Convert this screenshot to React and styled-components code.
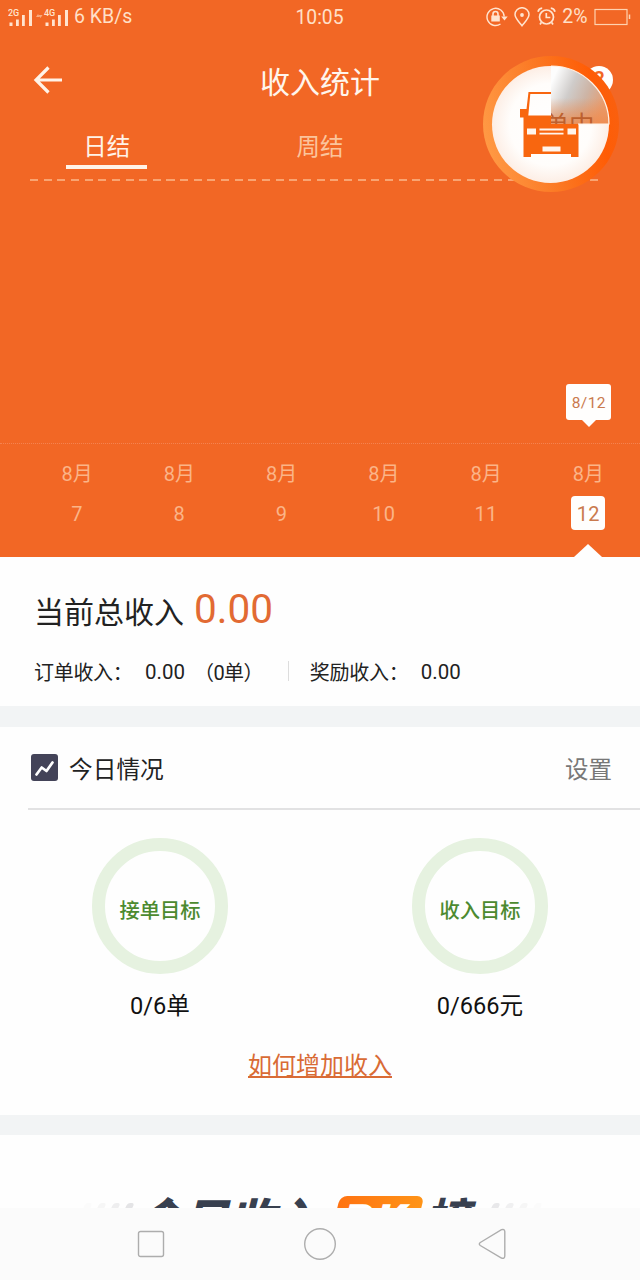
import styled, { createGlobalStyle } from 'styled-components';

const days = [
  { month: '8月', day: 7 },
  { month: '8月', day: 8 },
  { month: '8月', day: 9 },
  { month: '8月', day: 10 },
  { month: '8月', day: 11 },
  { month: '8月', day: 12, tip: '8/12' },
];

const goals = [
  { name: '接单目标', value: '0/6单' },
  { name: '收入目标', value: '0/666元' },
];

function SignalIcon({ label, arrows }) {
  return (
    <svg width={arrows ? 35 : 25} height="22" viewBox={arrows ? '-10 0 35 22' : '0 0 25 22'}>
      {arrows && (
        <path d="M-8 11l2-3 2 3zM-5.500 9l2 3 2-3z" fill="#f9ab80" />
      )}
      <text x="0" y="9.500" fontSize="9" fontWeight="500" fill="#ffe4cf">
        {label}
      </text>
      <path d="M1.500 16.500h3V20h-3zM8 13.500h2.800V20H8zM14 9h2.800v11H14zM21 4h3v16h-3z" fill="#ffe4cf" />
    </svg>
  );
}

function LockIcon() {
  return (
    <svg width="22" height="20" viewBox="0 0 22 20" fill="none" stroke="#ffe4cf" strokeWidth="1.400">
      <path d="M18.200 9.500A8.600 8.600 0 1 0 14.500 17" />
      <path d="M15.200 9.500h6.500l-3.200 4z" fill="#ffe4cf" stroke="none" />
      <rect x="5.300" y="8.500" width="8.500" height="6" fill="#ffe4cf" stroke="none" />
      <path d="M7 9V7a2.500 2.500 0 0 1 5 0v2" strokeWidth="1.600" />
    </svg>
  );
}

function PinIcon() {
  return (
    <svg width="16" height="20" viewBox="0 0 16 20" fill="none" stroke="#ffe4cf" strokeWidth="1.500">
      <path d="M8 18.700C4 13.700 1 11 1 7.500a7 6.800 0 0 1 14 0C15 11 12 13.700 8 18.700z" />
      <circle cx="8" cy="8" r="1.900" fill="#ffe4cf" stroke="none" />
    </svg>
  );
}

function AlarmIcon() {
  return (
    <svg width="19" height="19" viewBox="0 0 19 19" fill="none" stroke="#ffe4cf" strokeWidth="1.700">
      <circle cx="9.500" cy="10" r="7" />
      <path d="M9.300 6v4.500h4M1 4.800c.5-2 2-3.400 4.200-3.600M18 4.800c-.5-2-2-3.400-4.200-3.600M4.300 15.500L3 17.500M14.700 15.500l1.300 2" />
    </svg>
  );
}

function BatteryIcon() {
  return (
    <svg width="37" height="18" viewBox="0 0 37 18" fill="none" stroke="#ffd2b0" strokeWidth="1.200">
      <rect x="1" y="1.500" width="32" height="15" />
      <path d="M35.500 6.500v4.500" strokeWidth="1.500" />
    </svg>
  );
}

function BackArrow() {
  return (
    <svg width="30" height="28" viewBox="0 0 30 28" fill="none" stroke="#fff3e8" strokeWidth="3.200">
      <path d="M15.500 1.500L3 14l12.500 12.500M3 14h26" />
    </svg>
  );
}

function TrendIcon() {
  return (
    <svg width="27" height="27" viewBox="0 0 27 27">
      <rect width="27" height="27" rx="3" fill="#434358" />
      <path
        d="M5.500 20.500l5.200-7 4.800 3.500 6-8.500"
        fill="none"
        stroke="#fff"
        strokeWidth="2.700"
        strokeLinecap="round"
        strokeLinejoin="round"
      />
    </svg>
  );
}

function TruckBadge() {
  return (
    <svg width="136" height="136" viewBox="483 56 136 136">
      <defs>
        <linearGradient id="rim" x1="0" x2="1" y1="0.600" y2="0.400">
          <stop offset="0" stopColor="#ff9a45" />
          <stop offset="0.500" stopColor="#fb7621" />
          <stop offset="0.850" stopColor="#ff5c05" />
          <stop offset="1" stopColor="#f9600f" />
        </linearGradient>
        <radialGradient id="face">
          <stop offset="0" stopColor="#fff" />
          <stop offset="0.700" stopColor="#fffdfb" />
          <stop offset="1" stopColor="#fdeee5" />
        </radialGradient>
        <linearGradient id="sweep" x1="0" y1="0.300" x2="0.900" y2="0.700">
          <stop offset="0" stopColor="#fdfdfd" />
          <stop offset="0.350" stopColor="#cfccca" />
          <stop offset="0.650" stopColor="#cdb4a5" />
          <stop offset="1" stopColor="#e79d70" />
        </linearGradient>
        <linearGradient id="glow" x1="0" y1="0" x2="0" y2="1">
          <stop offset="0.550" stopColor="#f08a4c" stopOpacity="0" />
          <stop offset="1" stopColor="#f08a4c" stopOpacity="0.800" />
        </linearGradient>
        <clipPath id="sector">
          <path d="M551 124V66a58 58 0 0 1 58 58z" />
        </clipPath>
      </defs>
      <circle cx="551" cy="124" r="68" fill="url(#rim)" />
      <circle cx="550.500" cy="124.500" r="58.500" fill="url(#face)" />
      <g clipPath="url(#sector)">
        <path d="M551 124V66a58 58 0 0 1 58 58z" fill="url(#sweep)" />
        <path d="M551 124V66a58 58 0 0 1 58 58z" fill="url(#glow)" />
        <text x="543.500" y="134" fontSize="25.500" fill="#b95a28" opacity="0.900">
          单中
        </text>
      </g>
      <path
        d="M528.500 92H551v2h-20.700l-2 21.500H551v8.500h27.500v33H571v-3h-40v3h-7.500v-39.500H520V109h6.500z"
        fill="#f8660f"
      />
      <path
        d="M527 128.500h9v6h-9zM567.500 128.500h8.500v6h-8.500zM539.500 128.500h24v2h-24zM539.500 132.800h24v1.800h-24zM542.500 146.500h18v5h-18z"
        fill="#fff5ec"
      />
      <path d="M551 66a58 58 0 0 1 58 58h-31" fill="none" stroke="#fff2e6" strokeWidth="1.200" />
    </svg>
  );
}

export default function App() {
  return (
    <>
      <GlobalStyle />
      <Screen>
        <Header>
          <StatusBar>
            <StatusGroup>
              <SignalIcon label="2G" />
              <SignalIcon label="4G" arrows />
              <Speed>6 KB/s</Speed>
            </StatusGroup>
            <Clock>10:05</Clock>
            <StatusGroup $end>
              <LockIcon />
              <PinIcon />
              <AlarmIcon />
              <span>2%</span>
              <BatteryIcon />
            </StatusGroup>
          </StatusBar>
          <TitleBar>
            <BackArrow />
            <Title>收入统计</Title>
            <HelpButton>?</HelpButton>
          </TitleBar>
          <Tabs>
            <Tab $active>日结</Tab>
            <Tab>周结</Tab>
            <Tab>月结</Tab>
          </Tabs>
          <DashedLine />
          <FloatingBadge>
            <TruckBadge />
          </FloatingBadge>
          <Chart>
            {days.map(({ day, tip }) => (
              <Column key={day}>{tip && <Tooltip>{tip}</Tooltip>}</Column>
            ))}
          </Chart>
          <Dates>
            {days.map(({ month, day, tip }) => (
              <DateCell key={day}>
                <Month>{month}</Month>
                <Day $active={Boolean(tip)}>{day}</Day>
                {tip && <Pointer />}
              </DateCell>
            ))}
          </Dates>
        </Header>

        <Summary>
          <Total>
            当前总收入 <Amount>0.00</Amount>
          </Total>
          <Details>
            <Label>订单收入：</Label>
            <Value>0.00</Value>
            <Count>（0单）</Count>
            <Divider />
            <Label>奖励收入：</Label>
            <Value>0.00</Value>
          </Details>
        </Summary>

        <Gap />

        <Today>
          <TodayHeader>
            <TrendIcon />
            <TodayTitle>今日情况</TodayTitle>
            <Settings>设置</Settings>
          </TodayHeader>
          <Goals>
            {goals.map(({ name, value }) => (
              <Goal key={name}>
                <Ring>{name}</Ring>
                <GoalValue>{value}</GoalValue>
              </Goal>
            ))}
          </Goals>
          <MoreLink>如何增加收入</MoreLink>
        </Today>

        <Gap $short />

        <Ranking>
          <Slashes>
            <Slash $tone="#fbfbfb" />
            <Slash $tone="#f6f6f6" />
            <Slash $tone="#eeeeef" />
            <Slash $tone="#e4e4e6" />
          </Slashes>
          <RankingText>今日收入</RankingText>
          <PkTag>
            <PkText>PK</PkText>
          </PkTag>
          <RankingText>榜</RankingText>
          <Slashes $right>
            <Slash $tone="#e8e8ea" />
            <Slash $tone="#f0f0f1" />
            <Slash $tone="#f6f6f6" />
            <Slash $tone="#fbfbfb" />
          </Slashes>
        </Ranking>

        <NavBar>
          <svg width="28" height="28" fill="none" stroke="#adadad" strokeWidth="1.400">
            <rect x="1.500" y="1.500" width="25" height="25" rx="2" />
          </svg>
          <svg width="34" height="34" fill="none" stroke="#adadad" strokeWidth="1.400">
            <circle cx="17" cy="17" r="15.300" />
          </svg>
          <svg width="28" height="32" fill="none" stroke="#adadad" strokeWidth="1.400">
            <path d="M2.300 14.500L23.500 1.700Q26.500 0.800 26.800 3.500V28Q26.500 31.200 23.500 30L2.300 17.500Q0.300 16 2.300 14.500z" />
          </svg>
        </NavBar>
      </Screen>
    </>
  );
}

const GlobalStyle = createGlobalStyle`
  * {
    box-sizing: border-box;
  }
  body {
    margin: 0;
    font-family: Roboto, 'Noto Sans CJK SC', sans-serif;
  }
  svg {
    display: block;
    flex-shrink: 0;
  }
`;

const Screen = styled.main`
  display: flex;
  flex-direction: column;
  width: 640px;
  height: 1280px;
  overflow: hidden;
  background: #fefefe;
`;

const Header = styled.header`
  position: relative;
  height: 557px;
  background: #f26725;
`;

const StatusBar = styled.div`
  display: grid;
  grid-template-columns: 1fr auto 1fr;
  align-items: center;
  height: 33px;
  padding: 0 9px 0 8px;
  color: #ffe0c8;
  font-size: 19.5px;
`;

const StatusGroup = styled.div`
  display: flex;
  align-items: center;
  justify-content: ${({ $end }) => ($end ? 'flex-end' : 'flex-start')};
  gap: ${({ $end }) => ($end ? '6.5px' : '1px')};
`;

const Speed = styled.span`
  margin-left: 4px;
`;

const Clock = styled.span`
  padding-top: 1px;
  font-size: 19.3px;
`;

const TitleBar = styled.div`
  display: flex;
  align-items: center;
  justify-content: space-between;
  height: 94px;
  padding: 0 27px 0 33px;
`;

const Title = styled.h1`
  margin: 0 8px 0 0;
  color: #fff5ec;
  font-size: 30px;
  font-weight: 400;
`;

const HelpButton = styled.span`
  width: 28px;
  height: 28px;
  border-radius: 50%;
  background: #fff;
  color: #f26725;
  font-size: 22px;
  font-weight: 500;
  line-height: 28px;
  text-align: center;
`;

const Tabs = styled.div`
  display: grid;
  grid-template-columns: repeat(3, 1fr);
  justify-items: center;
  height: 42px;
`;

const Tab = styled.div`
  width: 81px;
  padding-top: 2px;
  border-bottom: 4px solid ${({ $active }) => ($active ? '#fff3e8' : 'transparent')};
  color: ${({ $active }) => ($active ? '#fff3e8' : '#fbc49c')};
  font-size: 23.5px;
  line-height: 36px;
  text-align: center;
`;

const DashedLine = styled.div`
  width: 568px;
  height: 2px;
  margin: 10px 0 0 30px;
  background: repeating-linear-gradient(90deg, #f9a472 0 8px, transparent 8px 13.65px);
`;

const FloatingBadge = styled.div`
  position: absolute;
  top: 56px;
  left: 483px;
`;

const Chart = styled.div`
  display: grid;
  grid-template-columns: repeat(6, 1fr);
  height: 263px;
  padding-left: 26px;
  border-bottom: 1px dotted #f58350;
`;

const Column = styled.div`
  display: flex;
  align-items: flex-end;
  justify-content: center;
  padding-bottom: 23px;
`;

const Tooltip = styled.span`
  position: relative;
  width: 45px;
  height: 36px;
  border-radius: 3px;
  background: #fffefd;
  color: #ca7a4e;
  font-size: 15.5px;
  letter-spacing: 0.4px;
  line-height: 38px;
  text-align: center;

  &::after {
    content: '';
    position: absolute;
    top: 36px;
    left: 16px;
    border: 7px solid transparent;
    border-top-color: #fffefd;
    border-bottom: 0;
  }
`;

const Dates = styled.div`
  display: grid;
  grid-template-columns: repeat(6, 1fr);
  height: 113px;
  padding: 15px 0.5px 0 26px;
`;

const DateCell = styled.div`
  display: flex;
  flex-direction: column;
  align-items: center;
`;

const Month = styled.span`
  color: #fbb488;
  font-size: 20px;
  line-height: 30px;
`;

const Day = styled.span`
  width: 34px;
  height: 34px;
  margin-top: 7px;
  border-radius: 4px;
  background: ${({ $active }) => ($active ? '#fffefd' : 'transparent')};
  color: ${({ $active }) => ($active ? '#ca7a4e' : '#fbb488')};
  font-size: 20px;
  letter-spacing: 0.4px;
  line-height: 36px;
  text-align: center;
`;

const Pointer = styled.span`
  margin-top: auto;
  border: 14px solid transparent;
  border-top: 0;
  border-bottom: 13px solid #fefefe;
`;

const Summary = styled.section`
  height: 149px;
  padding: 27px 34px 0;
  color: #222;
`;

const Total = styled.div`
  display: flex;
  align-items: baseline;
  gap: 10px;
  height: 50px;
  font-size: 30px;
  line-height: 50px;
`;

const Amount = styled.span`
  color: #e26a33;
  font-size: 40.5px;
`;

const Details = styled.div`
  display: flex;
  align-items: center;
  height: 30px;
  margin-top: 22px;
  font-size: 20px;
`;

const Label = styled.span`
  width: 111px;
  letter-spacing: -0.3px;
`;

const Value = styled.span`
  padding-top: 1px;
  font-size: 20.5px;
`;

const Count = styled.span`
  margin: 0 3px 0 9px;
  letter-spacing: -0.6px;
`;

const Divider = styled.span`
  width: 1px;
  height: 20px;
  margin: 0 21px 0 22px;
  background: #ddd;
`;

const Gap = styled.div`
  height: ${({ $short }) => ($short ? '20px' : '21px')};
  background: #f2f4f5;
`;

const Today = styled.section`
  height: 388px;
`;

const TodayHeader = styled.div`
  display: flex;
  align-items: center;
  height: 83px;
  margin-left: 28px;
  padding: 0 28px 0 3px;
  border-bottom: 2px solid #e2e2e3;
`;

const TodayTitle = styled.h2`
  flex: 1;
  margin: 0 0 0 11px;
  color: #222;
  font-size: 23.7px;
  font-weight: 400;
`;

const Settings = styled.span`
  color: #777;
  font-size: 23.5px;
`;

const Goals = styled.div`
  display: grid;
  grid-template-columns: 1fr 1fr;
  padding-top: 28px;
`;

const Goal = styled.div`
  display: flex;
  flex-direction: column;
  align-items: center;
`;

const Ring = styled.div`
  display: flex;
  align-items: center;
  justify-content: center;
  width: 136px;
  height: 136px;
  padding-top: 6px;
  border: 13px solid #e6f2e0;
  border-radius: 50%;
  color: #4c8a30;
  font-size: 20.3px;
  font-weight: 500;
`;

const GoalValue = styled.span`
  margin-top: 15px;
  color: #111;
  font-size: 23.6px;
  line-height: 34px;
`;

const MoreLink = styled.a`
  display: block;
  margin-top: 26px;
  color: #d96b35;
  font-size: 24px;
  line-height: 34px;
  text-align: center;
  text-decoration: underline;
`;

const Ranking = styled.section`
  display: flex;
  align-items: flex-start;
  height: 73px;
  padding: 61px 0 0 80px;
  overflow: hidden;
`;

const Slashes = styled.div`
  display: flex;
  gap: 7px;
  width: 56px;
  margin-left: ${({ $right }) => ($right ? '18px' : '0')};
  padding: 7px 0 0;
`;

const Slash = styled.span`
  width: 7px;
  height: 24px;
  border-radius: 3px;
  background: ${({ $tone }) => $tone};
  transform: skewX(-25deg);
`;

const RankingText = styled.span`
  padding-top: 3px;
  color: #38404f;
  font-size: 46px;
  font-style: italic;
  font-weight: 900;
  line-height: 45px;
`;

const PkTag = styled.div`
  width: 84px;
  height: 50px;
  margin: 0 6px 0 14px;
  padding-top: 2px;
  border-radius: 7px;
  background: linear-gradient(90deg, #ff7312, #ff9417);
  text-align: center;
  transform: skewX(-14deg);
`;

const PkText = styled.span`
  color: #fff;
  font-size: 46px;
  font-weight: 900;
  letter-spacing: 3px;
  line-height: 46px;
`;

const NavBar = styled.nav`
  display: flex;
  align-items: center;
  justify-content: space-between;
  height: 72px;
  padding: 0 134px 0 137px;
  background: #fbfbfb;

  svg:nth-child(2) {
    margin-right: 3px;
  }
`;
